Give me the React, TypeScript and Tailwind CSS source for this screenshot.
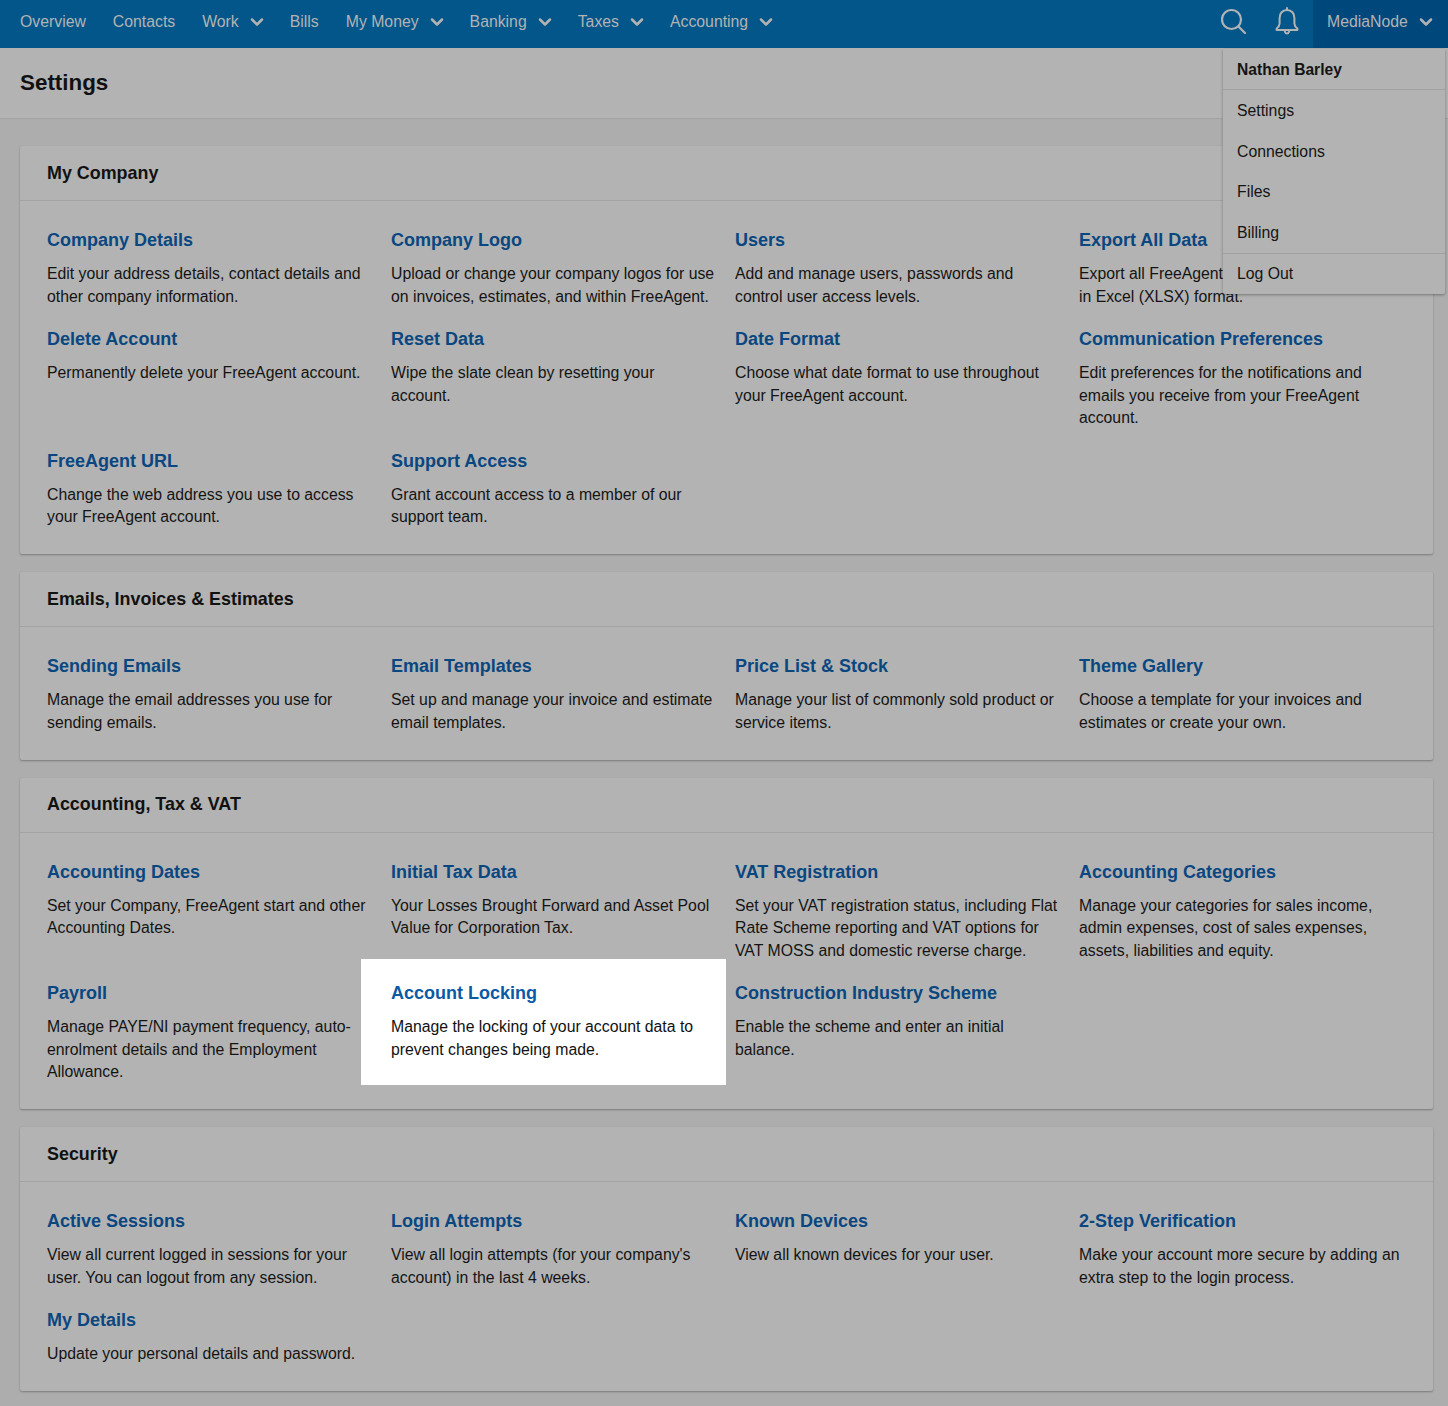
import { ChevronDown } from "lucide-react";

type Item = { title: string; desc: string; highlight?: boolean };
type Section = { heading: string; items: Item[] };

const nav = [
  { label: "Overview" },
  { label: "Contacts" },
  { label: "Work", menu: true },
  { label: "Bills" },
  { label: "My Money", menu: true },
  { label: "Banking", menu: true },
  { label: "Taxes", menu: true },
  { label: "Accounting", menu: true },
];

const sections: Section[] = [
  {
    heading: "My Company",
    items: [
      { title: "Company Details", desc: "Edit your address details, contact details and other company information." },
      { title: "Company Logo", desc: "Upload or change your company logos for use on invoices, estimates, and within FreeAgent." },
      { title: "Users", desc: "Add and manage users, passwords and control user access levels." },
      { title: "Export All Data", desc: "Export all FreeAgent\nin Excel (XLSX) format." },
      { title: "Delete Account", desc: "Permanently delete your FreeAgent account." },
      { title: "Reset Data", desc: "Wipe the slate clean by resetting your account." },
      { title: "Date Format", desc: "Choose what date format to use throughout your FreeAgent account." },
      { title: "Communication Preferences", desc: "Edit preferences for the notifications and emails you receive from your FreeAgent account." },
      { title: "FreeAgent URL", desc: "Change the web address you use to access your FreeAgent account." },
      { title: "Support Access", desc: "Grant account access to a member of our support team." },
    ],
  },
  {
    heading: "Emails, Invoices & Estimates",
    items: [
      { title: "Sending Emails", desc: "Manage the email addresses you use for sending emails." },
      { title: "Email Templates", desc: "Set up and manage your invoice and estimate email templates." },
      { title: "Price List & Stock", desc: "Manage your list of commonly sold product or service items." },
      { title: "Theme Gallery", desc: "Choose a template for your invoices and estimates or create your own." },
    ],
  },
  {
    heading: "Accounting, Tax & VAT",
    items: [
      { title: "Accounting Dates", desc: "Set your Company, FreeAgent start and other Accounting Dates." },
      { title: "Initial Tax Data", desc: "Your Losses Brought Forward and Asset Pool Value for Corporation Tax." },
      { title: "VAT Registration", desc: "Set your VAT registration status, including Flat Rate Scheme reporting and VAT options for VAT MOSS and domestic reverse charge." },
      { title: "Accounting Categories", desc: "Manage your categories for sales income, admin expenses, cost of sales expenses, assets, liabilities and equity." },
      { title: "Payroll", desc: "Manage PAYE/NI payment frequency, auto-enrolment details and the Employment Allowance." },
      { title: "Account Locking", desc: "Manage the locking of your account data to prevent changes being made.", highlight: true },
      { title: "Construction Industry Scheme", desc: "Enable the scheme and enter an initial balance." },
    ],
  },
  {
    heading: "Security",
    items: [
      { title: "Active Sessions", desc: "View all current logged in sessions for your user. You can logout from any session." },
      { title: "Login Attempts", desc: "View all login attempts (for your company's account) in the last 4 weeks." },
      { title: "Known Devices", desc: "View all known devices for your user." },
      { title: "2-Step Verification", desc: "Make your account more secure by adding an extra step to the login process." },
      { title: "My Details", desc: "Update your personal details and password." },
    ],
  },
];

function Chevron() {
  return <ChevronDown className="-mr-[4px] ml-[8px] h-5 w-5" strokeWidth={3} />;
}

function TopBar() {
  return (
    <header className="flex h-12 items-center justify-between bg-[#02568a] pl-5 text-[15.8px] text-[#b3b3b3]">
      <nav className="flex items-center gap-[27px]">
        {nav.map((n) => (
          <a key={n.label} className="-mt-[5px] flex h-6 items-center">
            {n.label}
            {n.menu && <Chevron />}
          </a>
        ))}
      </nav>
      <div className="flex h-full items-center">
        <svg className="-mt-[6px] mr-[27px] h-[26px] w-[26px]" viewBox="0 0 26 26" fill="none" stroke="currentColor" strokeWidth="2.2" strokeLinecap="round">
          <circle cx="10.500" cy="11.500" r="9.500" />
          <path d="M17.500 18.500L24 25" />
        </svg>
        <svg className="-mt-[7px] mr-[13px] h-[28px] w-[26px]" viewBox="0 0 26 28" fill="none" stroke="currentColor" strokeWidth="2" strokeLinejoin="round" strokeLinecap="round">
          <path d="M13 3c-4.600 0-7.400 3.400-7.400 8v5.500c0 2.300-1.300 3.700-3 5v1.500h20.800v-1.500c-1.700-1.300-3-2.700-3-5V11c0-4.600-2.800-8-7.400-8z" />
          <path d="M13 1v2" />
          <path d="M10.800 24.500c.4 1.300 1.200 2 2.200 2s1.800-.7 2.200-2" />
        </svg>
        <div className="relative flex h-full w-[135px] items-center bg-[#00477c] pl-[14px]">
          <span className="-mt-[5px] flex h-6 items-center">
            MediaNode
            <Chevron />
          </span>
          <UserMenu />
        </div>
      </div>
    </header>
  );
}

function UserMenu() {
  return (
    <div className="absolute left-[-90px] top-[49px] z-10 w-[222px] rounded-b-[2px] bg-[#b3b3b3] text-[15.8px] text-[#141414] shadow-[0_1px_3px_rgba(0,0,0,0.35)]">
      <div className="flex h-[41px] items-center border-b border-[#a0a0a0] px-[14px] pt-[2px] text-[15.6px] font-bold">Nathan Barley</div>
      <div className="flex flex-col border-b border-[#a0a0a0] pt-[1px]">
        {["Settings", "Connections", "Files", "Billing"].map((m) => (
          <a key={m} className="flex h-[40.400px] items-center px-[14px]">
            {m}
          </a>
        ))}
      </div>
      <div className="flex h-[40px] items-center px-[14px]">Log Out</div>
    </div>
  );
}

function SettingItem({ item }: { item: Item }) {
  return (
    <div className={`relative pr-[18px] ${item.highlight ? "self-start" : ""}`}>
      {item.highlight && <div className="absolute -bottom-[24px] -left-[30px] -top-[22px] right-[9px] bg-white" />}
      <div className="relative">
        <h3 className={`mb-[11px] text-[18px] font-bold leading-6 ${item.highlight ? "text-[#0b5aa5]" : "text-[#0a4780]"}`}>
          {item.title}
        </h3>
        <p className={`whitespace-pre-line text-[15.800px] leading-[22.500px] ${item.highlight ? "text-[#111]" : "text-[#141414]"}`}>{item.desc}</p>
      </div>
    </div>
  );
}

function Card({ section }: { section: Section }) {
  return (
    <section className="rounded-[2px] bg-[#b3b3b3] shadow-[0_1px_2px_rgba(0,0,0,0.3)]">
      <div className="flex h-[55px] items-center border-b border-[#a3a3a3] pl-[27px] text-[17.900px] font-bold text-[#111]">
        {section.heading}
      </div>
      <div className="grid grid-cols-[344px_344px_344px_344px] gap-y-[19px] pb-[25.500px] pl-[27px] pt-[27px]">
        {section.items.map((item) => (
          <SettingItem key={item.title} item={item} />
        ))}
      </div>
    </section>
  );
}

export default function App() {
  return (
    <div className="min-h-[1406px] bg-[#adadad] font-['Liberation_Sans',Arial,sans-serif]">
      <TopBar />
      <div className="flex h-[71px] items-center border-b border-[#a3a3a3] bg-[#b3b3b3] pl-5 text-[22.400px] font-bold text-[#111]">
        Settings
      </div>
      <main className="flex flex-col gap-[18px] pb-[15px] pl-5 pr-[15px] pt-[27px]">
        {sections.map((s) => (
          <Card key={s.heading} section={s} />
        ))}
      </main>
    </div>
  );
}
